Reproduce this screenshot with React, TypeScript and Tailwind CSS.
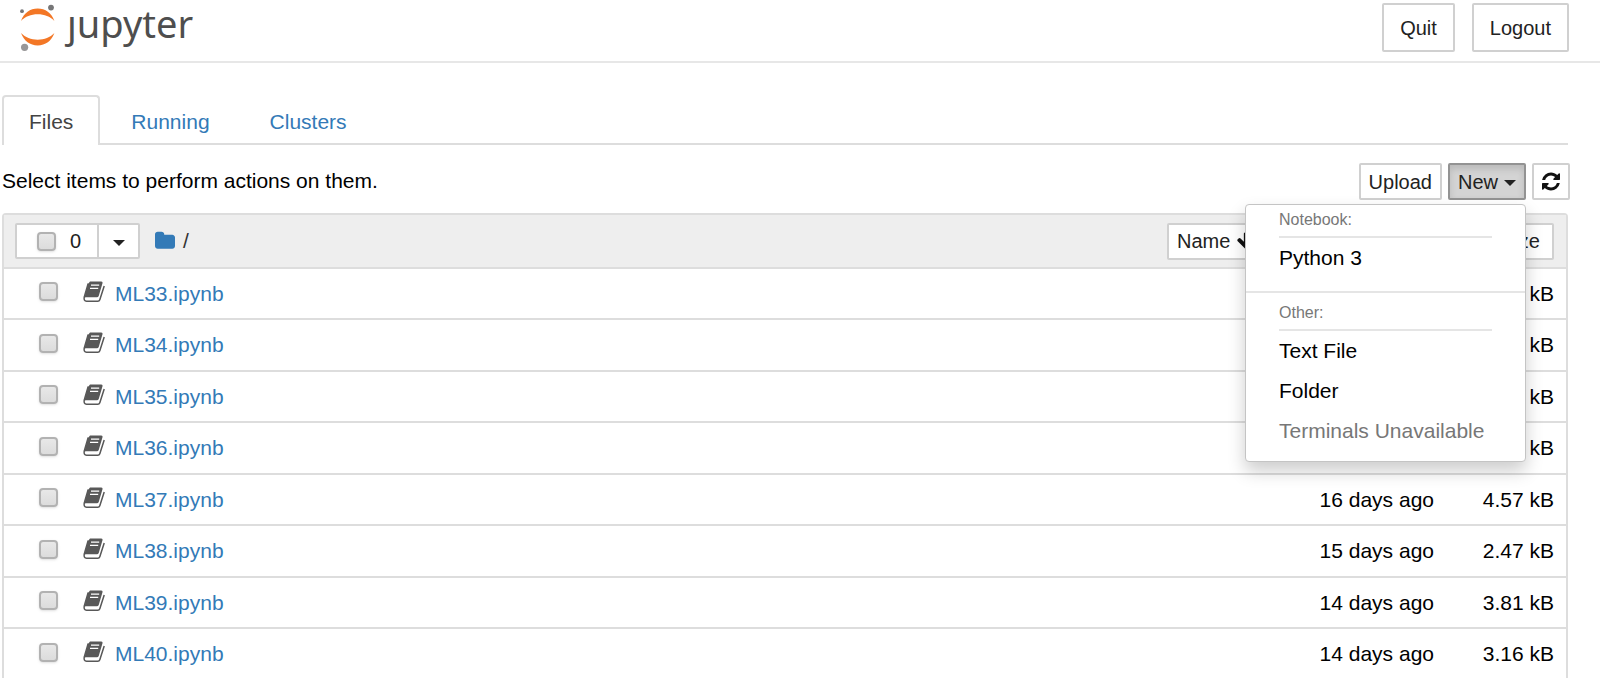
import type { ReactNode } from "react";

const files = [
  { name: "ML33.ipynb", modified: "16 days ago", size: "2.07 kB" },
  { name: "ML34.ipynb", modified: "16 days ago", size: "3.12 kB" },
  { name: "ML35.ipynb", modified: "16 days ago", size: "2.86 kB" },
  { name: "ML36.ipynb", modified: "16 days ago", size: "3.54 kB" },
  { name: "ML37.ipynb", modified: "16 days ago", size: "4.57 kB" },
  { name: "ML38.ipynb", modified: "15 days ago", size: "2.47 kB" },
  { name: "ML39.ipynb", modified: "14 days ago", size: "3.81 kB" },
  { name: "ML40.ipynb", modified: "14 days ago", size: "3.16 kB" },
];

const checkboxClass =
  "block h-[19px] w-[19px] shrink-0 appearance-none rounded border-2 border-[#b2b2b2] bg-linear-to-b from-[#e8e8e8] to-[#dcdcdc] shadow-sm";

const smallButtonClass =
  "flex h-[37px] items-center rounded-xs border-2 border-[#d0d0d0] bg-white px-2 text-[20px] leading-6 text-[#222]";

function Caret() {
  return (
    <svg viewBox="0 0 12 6" className="h-[6px] w-[12px]" fill="currentColor" aria-hidden="true">
      <path d="M0 0h12L6 6z" />
    </svg>
  );
}

function RefreshIcon() {
  return (
    <svg viewBox="0 0 1536 1792" className="h-[21px] w-[18px]" fill="#111" aria-hidden="true">
      <path d="M1511 1056q0 5-1 7-64 268-268 434.5t-478 166.5q-146 0-282.5-55t-243.5-157l-129 129q-19 19-45 19t-45-19-19-45v-448q0-26 19-45t45-19h448q26 0 45 19t19 45-19 45l-137 137q71 66 161 102t187 36q134 0 250-65t186-179q11-17 53-117 8-23 30-23h192q13 0 22.5 9.5t9.5 22.5zm25-800v448q0 26-19 45t-45 19h-448q-26 0-45-19t-19-45 19-45l138-138q-148-137-349-137-134 0-250 65t-186 179q-11 17-53 117-8 23-30 23h-199q-13 0-22.5-9.5t-9.5-22.5v-7q65-268 270-434.5t480-166.5q146 0 284 55.5t245 156.5l130-129q19-19 45-19t45 19 19 45z" />
    </svg>
  );
}

function BookIcon() {
  return (
    <svg viewBox="0 0 22 22" className="h-[22px] w-[22px]" aria-hidden="true">
      <path d="M7 .5h11.300q1.700 0 1.200 1.700L15.800 14.800q-.5 1.500-2 1.500H3q-1.500 0-1.800 1L5 3z" fill="#585858" />
      <path d="M5.200 2.500L1.200 16.200Q.6 20.200 3.500 20.200H14.800q1.500 0 2-1.500L21.200 5" fill="none" stroke="#585858" strokeWidth="1.500" />
      <path d="M8 4.200h8.200M7 7.400h8.200" stroke="#fff" strokeWidth="1.300" />
    </svg>
  );
}

function Logo() {
  return (
    <a href="#tree" aria-label="jupyter" className="flex h-full items-start pl-5 text-[#4e4e4e]">
      <svg viewBox="0 0 36 48" className="mt-1 h-[48px] w-[36px]" aria-hidden="true">
        <path d="M1 17C4 9 10 4.600 17.700 4.600S31.500 9 34.400 17C30 12.500 24.500 10.300 17.700 10.300S5.500 12.500 1 17z" fill="#f37726" />
        <path d="M1 29C4 37 10 41.400 17.700 41.400S31.500 37 34.400 29C30 33.500 24.500 35.700 17.700 35.700S5.500 33.500 1 29z" fill="#f37726" />
        <circle cx="31" cy="3.600" r="2.900" fill="#767677" />
        <circle cx="2" cy="7.200" r="1.900" fill="#767677" />
        <circle cx="4.600" cy="43.300" r="3.600" fill="#989798" />
      </svg>
      <span className="pl-[11px] font-['Noto_Sans','Open_Sans',sans-serif] text-[38px] leading-[46px]">ȷupyter</span>
    </a>
  );
}

function MenuLabel({ children }: { children: ReactNode }) {
  return (
    <div className="mx-[33px] h-8 border-b-2 border-[#e5e5e5] pt-[2px] text-[16px] leading-6 text-[#777]">
      {children}
    </div>
  );
}

function NewMenu() {
  return (
    <div className="absolute top-full right-0 z-10 mt-1 w-[281px] rounded-sm border border-[#c4c4c4] bg-white pt-px pb-[10px] text-[21px] leading-10 text-black shadow-[0_9px_18px_rgba(0,0,0,0.2)]">
      <MenuLabel>Notebook:</MenuLabel>
      <a href="#python3" className="block px-[33px]">Python 3</a>
      <hr className="mt-[13px] mb-[6px] border-t-2 border-[#e5e5e5]" />
      <MenuLabel>Other:</MenuLabel>
      <a href="#text" className="block px-[33px]">Text File</a>
      <a href="#folder" className="block px-[33px]">Folder</a>
      <span className="block px-[33px] whitespace-nowrap text-[#777]">Terminals Unavailable</span>
    </div>
  );
}

function ListHeader() {
  return (
    <div className="flex h-[52px] items-center pr-3 pl-[11px]">
      <div className="flex">
        <label className="flex h-9 w-[84px] items-center gap-[14px] rounded-l-xs border-2 border-[#d0d0d0] bg-white pl-5 text-[20px] text-[#222]">
          <input type="checkbox" className={checkboxClass} />
          0
        </label>
        <button
          aria-label="Select by type"
          className="-ml-[2px] flex h-9 w-[43px] items-center justify-center rounded-r-xs border-2 border-[#d0d0d0] bg-white pt-1 text-[#222]"
        >
          <Caret />
        </button>
      </div>
      <a href="#root" aria-label="Home" className="ml-[15px]">
        <svg viewBox="0 0 1664 1792" className="h-[22px] w-[20px]" fill="#337ab7" aria-hidden="true">
          <path d="M1664 608v704q0 92-66 158t-158 66h-1216q-92 0-158-66t-66-158v-960q0-92 66-158t158-66h320q92 0 158 66t66 158v32h672q92 0 158 66t66 158z" />
        </svg>
      </a>
      <span className="ml-2 text-[21px] text-[#333]">/</span>
      <div className="ml-auto flex w-[387px] justify-between">
        <button className={smallButtonClass}>
          Name
          <svg viewBox="0 0 1792 1792" className="ml-[6px] h-[20px] w-[20px]" fill="#111" aria-hidden="true">
            <path d="M1675 832q0 53-37 90l-651 652q-39 37-91 37-53 0-90-37l-651-652q-38-36-38-90 0-53 38-91l74-75q39-37 91-37 53 0 90 37l294 294v-704q0-52 38-90t90-38h128q52 0 90 38t38 90v704l294-294q37-37 90-37 52 0 91 37l75 75q37 39 37 91z" />
          </svg>
        </button>
        <button className={smallButtonClass}>Last Modified</button>
        <button className="flex h-[37px] items-center rounded-xs border-2 border-[#d0d0d0] bg-white px-3 text-[20px] leading-6 text-[#222]">
          File size
        </button>
      </div>
    </div>
  );
}

export default function App() {
  return (
    <div className="min-h-screen bg-white font-['Liberation_Sans',Arial,sans-serif] text-[21px] text-black">
      <header className="flex h-[63px] items-start justify-between border-b-2 border-[#e7e7e7] pr-[31px]">
        <Logo />
        <div className="flex gap-[17px] pt-[3px] text-[20px] text-[#222]">
          <button className="h-[49px] rounded-xs border-2 border-[#d0d0d0] px-4">Quit</button>
          <button className="h-[49px] rounded-xs border-2 border-[#d0d0d0] px-4">Logout</button>
        </div>
      </header>

      <main className="pt-8 pr-8 pl-[2px]">
        <nav className="flex h-[50px] gap-[2px] border-b-2 border-[#dddddd] text-[#337ab7]">
          <a
            href="#files"
            className="-mb-[2px] rounded-t border-2 border-b-0 border-[#dddddd] bg-white px-[25px] pt-[11px] leading-7 text-[#444]"
          >
            Files
          </a>
          <a href="#running" className="px-[29px] pt-[13px] leading-7">Running</a>
          <a href="#clusters" className="px-[29px] pt-[13px] leading-7">Clusters</a>
        </nav>

        <div className="-mr-[2px] flex items-start justify-between pt-[18px] pb-[13px]">
          <p className="leading-9">Select items to perform actions on them.</p>
          <div className="flex gap-[6px]">
            <button className={smallButtonClass}>Upload</button>
            <div className="relative">
              <button
                aria-expanded="true"
                className="flex h-[37px] items-center gap-[6px] rounded-xs border-2 border-[#939393] bg-[#d4d4d4] px-2 text-[20px] leading-6 text-[#222] shadow-[inset_0_4px_7px_rgba(0,0,0,0.125)]"
              >
                New
                <span className="pt-[3px]">
                  <Caret />
                </span>
              </button>
              <NewMenu />
            </div>
            <button aria-label="Refresh" className={smallButtonClass}>
              <RefreshIcon />
            </button>
          </div>
        </div>

        <table className="w-full border-separate border-spacing-0 rounded-t-sm border-2 border-[#dddddd]">
          <thead>
            <tr>
              <th colSpan={3} className="bg-[#eeeeee] p-0 text-left font-normal">
                <ListHeader />
              </th>
            </tr>
          </thead>
          <tbody>
            {files.map((file) => (
              <tr key={file.name} className="h-[51px] even:h-[52px]">
                <td className="border-t-2 border-[#dddddd] p-0">
                  <div className="flex items-center pl-[35px]">
                    <input type="checkbox" aria-label={file.name} className={checkboxClass + " mb-1"} />
                    <span className="mb-1 ml-[25px]">
                      <BookIcon />
                    </span>
                    <a href="#notebook" className="ml-[10px] leading-7 text-[#337ab7]">{file.name}</a>
                  </div>
                </td>
                <td className="border-t-2 border-[#dddddd] p-0 text-right leading-7">{file.modified}</td>
                <td className="w-[132px] border-t-2 border-[#dddddd] p-0 pr-3 text-right leading-7">{file.size}</td>
              </tr>
            ))}
          </tbody>
        </table>
      </main>
    </div>
  );
}
